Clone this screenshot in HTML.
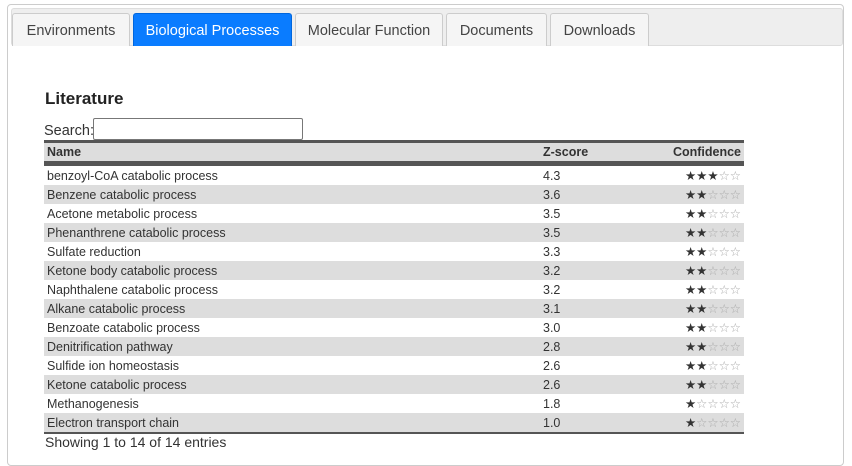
<!DOCTYPE html>
<html><head><style>
html,body{margin:0;overflow:hidden;height:452px;}
body{background:#fff;font-family:"Liberation Sans",sans-serif;color:#333;}
.wrap{position:absolute;left:7px;top:4px;width:835px;height:460px;border:1px solid #ccc;border-radius:4px;}
.bar{position:absolute;left:11px;top:8px;width:832px;height:38px;background:#eee;border:1px solid #ddd;border-radius:3px;box-sizing:border-box;}
.tab{position:absolute;top:13px;height:33px;box-sizing:border-box;border:1px solid #ccc;border-bottom:none;background:#f5f5f5;border-radius:3px 3px 0 0;font-size:14.5px;line-height:34px;text-align:center;color:#444;}
.tab.a{background:#0a7cff;border-color:#0066dd;color:#fff;}
h3{position:absolute;left:45px;top:89px;margin:0;font-size:17px;font-weight:bold;color:#222;}
.search{position:absolute;left:44px;top:120px;font-size:14.5px;}
.search span{display:inline-block;width:208px;height:20px;border:1px solid #777;border-radius:2px;vertical-align:middle;margin-left:-1px;position:relative;top:-2px}
table{position:absolute;left:44px;top:140px;width:700px;border-collapse:collapse;font-size:12.5px;}
th{background:#ddd;font-weight:bold;text-align:left;height:16px;padding:0 3px;border-top:3px solid #555;border-bottom:5px solid #555;line-height:18px;}
td{height:19px;padding:0 3px;line-height:18px;}
tr:nth-child(odd) td{background:#ddd;}
tr:last-child td{border-bottom:2px solid #555;}
.c{text-align:right;color:#333;font-size:12.5px;letter-spacing:0;}
.c i{font-style:normal;color:#aaa}
.foot{position:absolute;left:45px;top:434px;font-size:14px;}
</style></head><body>
<div class="wrap"></div>
<div class="bar"></div>
<div class="tab" style="left:12px;width:118px">Environments</div>
<div class="tab a" style="left:133px;width:159px">Biological Processes</div>
<div class="tab" style="left:295px;width:148px">Molecular Function</div>
<div class="tab" style="left:446px;width:101px">Documents</div>
<div class="tab" style="left:550px;width:99px">Downloads</div>
<h3>Literature</h3>
<div class="search">Search:<span></span></div>
<table>
<tr><th style="width:490px">Name</th><th>Z-score</th><th style="text-align:right">Confidence</th></tr>
<tr><td>benzoyl-CoA catabolic process</td><td>4.3</td><td class="c">★★★<i>☆☆</i></td></tr>
<tr><td>Benzene catabolic process</td><td>3.6</td><td class="c">★★<i>☆☆☆</i></td></tr>
<tr><td>Acetone metabolic process</td><td>3.5</td><td class="c">★★<i>☆☆☆</i></td></tr>
<tr><td>Phenanthrene catabolic process</td><td>3.5</td><td class="c">★★<i>☆☆☆</i></td></tr>
<tr><td>Sulfate reduction</td><td>3.3</td><td class="c">★★<i>☆☆☆</i></td></tr>
<tr><td>Ketone body catabolic process</td><td>3.2</td><td class="c">★★<i>☆☆☆</i></td></tr>
<tr><td>Naphthalene catabolic process</td><td>3.2</td><td class="c">★★<i>☆☆☆</i></td></tr>
<tr><td>Alkane catabolic process</td><td>3.1</td><td class="c">★★<i>☆☆☆</i></td></tr>
<tr><td>Benzoate catabolic process</td><td>3.0</td><td class="c">★★<i>☆☆☆</i></td></tr>
<tr><td>Denitrification pathway</td><td>2.8</td><td class="c">★★<i>☆☆☆</i></td></tr>
<tr><td>Sulfide ion homeostasis</td><td>2.6</td><td class="c">★★<i>☆☆☆</i></td></tr>
<tr><td>Ketone catabolic process</td><td>2.6</td><td class="c">★★<i>☆☆☆</i></td></tr>
<tr><td>Methanogenesis</td><td>1.8</td><td class="c">★<i>☆☆☆☆</i></td></tr>
<tr><td>Electron transport chain</td><td>1.0</td><td class="c">★<i>☆☆☆☆</i></td></tr>
</table>
<div class="foot">Showing 1 to 14 of 14 entries</div>
</body></html>
